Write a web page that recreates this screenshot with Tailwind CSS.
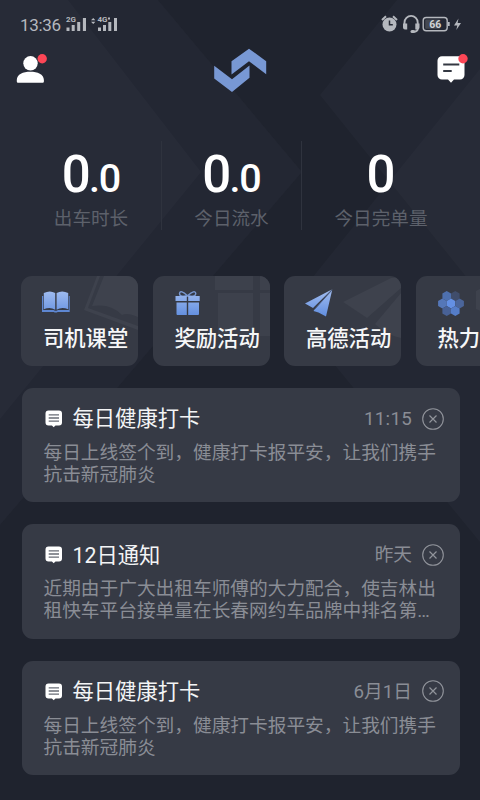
<!DOCTYPE html>
<html lang="zh-CN">
<head>
<meta charset="utf-8">
<title>司机首页</title>
<script src="https://cdn.jsdelivr.net/npm/@tailwindcss/browser@4"></script>
</head>
<body class="bg-[#1f232e]">
<svg class="absolute" width="0" height="0">
  <defs>
    <linearGradient id="blue" gradientUnits="userSpaceOnUse" x1="0" y1="3" x2="0" y2="28"><stop offset="0" stop-color="#a2bdf0"/><stop offset="1" stop-color="#6490e0"/></linearGradient>
    <symbol id="note" viewBox="0 0 18 18"><path fill="#fff" d="M3.500 .5h10.500a3 3 0 0 1 3 3v9a3 3 0 0 1-3 3H10.500L8.700 17.300 6.900 15.500H3.500a3 3 0 0 1-3-3v-9a3 3 0 0 1 3-3z"/><path d="M3.700 4.800h10.300M3.700 8h10.300M3.700 11.200h10.300" stroke="#686c76" stroke-width="1.300"/></symbol>
    <symbol id="close" viewBox="0 0 22 22"><circle cx="11" cy="11" r="10.300" fill="none" stroke="#91949b" stroke-width="1.100"/><path d="M7.500 7.500l7 7m0-7l-7 7" stroke="#91949b" stroke-width="1.200"/></symbol>
  </defs>
</svg>
<div class="relative w-[480px] h-[800px] overflow-hidden font-['Roboto','Noto_Sans_CJK_SC',sans-serif]">
  <svg class="absolute inset-0" width="480" height="800" viewBox="0 0 480 800">
    <g fill="#8692ac" fill-opacity=".045">
      <path d="M0 0H158L302 172 0 525z"/>
      <path d="M0 0H68L201 172 0 419z"/>
      <path d="M397 0L320 95 480 294V0z"/>
      <path d="M480 69L288 308 480 542z"/>
    </g>
  </svg>

  <div class="relative flex flex-col h-full">
    <header class="h-[48px] flex items-center justify-between pl-[20px] pr-[17px] text-[#b5b8be]">
      <div class="flex items-center">
        <span class="text-[17px] leading-[20px] w-[46px] tracking-[-.35px] mt-[2px]">13:36</span>
        <svg width="54" height="18" viewBox="0 0 54 18" fill="currentColor">
          <text x="0" y="7" font-size="8" font-weight="700" font-family="Roboto">2G</text>
          <path d="M.5 12.500h3V16h-3zM5.700 10h3v6h-3zM11.200 7h3v9h-3zM16.900 3H20v13h-3.100z"/>
          <path d="M25 5.300l2.200-2.300 2.200 2.300zM25 6.700h4.400L27.200 9z"/>
          <text x="31.500" y="7" font-size="8" font-weight="700" font-family="Roboto">4G</text>
          <path d="M42 2.500h2v2h-2zM32 12.500h3V16h-3zM37 10h3v6h-3zM42.300 7h3v9h-3zM48 3h3v13h-3z"/>
        </svg>
      </div>
      <svg width="82" height="20" viewBox="0 0 82 20" fill="none" stroke="currentColor">
        <circle cx="8.500" cy="10.500" r="7" fill="currentColor" stroke="none"/>
        <path d="M1 6l4-3.700M16 6l-4-3.700" stroke-width="2"/><path d="M8.500 6.500v4.300h3.300" stroke="#252934" stroke-width="1.500"/>
        <path d="M23.500 12V8.500a6.600 6.600 0 0 1 13.200 0V12M36.800 13v1.500q0 3.200-4.300 3.200" stroke-width="1.900"/>
        <path fill="currentColor" stroke="none" d="M22 9.500h4.200v6H24q-2 0-2-2zM38.500 9.500h-4.200v6h2.200q2 0 2-2z"/><rect x="29.500" y="16" width="4.500" height="3" rx="1.500" fill="currentColor" stroke="none"/>
        <rect x="42.200" y="3.500" width="24" height="13.200" rx="3" stroke-width="1.400"/><rect x="44.200" y="5.500" width="15" height="9.200" rx="1" fill="#444852" stroke="none"/><path d="M67.800 8v4" stroke-width="1.800"/>
        <text x="54.200" y="13.900" text-anchor="middle" font-size="10.500" font-weight="700" font-family="Roboto" fill="#d0d2d6" stroke="none">66</text>
        <path d="M77.500 4.500L73 11.500h3.300L75.300 16 80 9h-3.400z" fill="currentColor" stroke="none"/>
      </svg>
    </header>

    <nav class="h-[52px] flex items-start justify-between pl-[16px] pr-[11px]">
      <svg class="mt-[5px]" width="34" height="32" viewBox="0 0 34 32">
        <circle cx="14.500" cy="10.300" r="7.200" fill="#fff"/><path fill="#fff" d="M.8 28.500V27C1 21 7 18.700 14.300 18.700S27.800 21 27.900 27v1.500q0 1.200-1.200 1.200H2q-1.200 0-1.200-1.200z"/><circle cx="26.200" cy="5.800" r="4.700" fill="#fc4656"/>
      </svg>
      <svg class="mr-[6px]" width="54" height="46" viewBox="0 0 54 46" fill="#7898d4">
        <path d="M1.200 17.800L19 31.200 36.500 17.500V29.800L19 44 1.200 30.500z"/>
        <path d="M18.500 13.300L36 .7 53.200 13.300V26.300L36 13.300 18.500 26.600z"/>
      </svg>
      <svg class="mt-[5px]" width="33" height="32" viewBox="0 0 33 32">
        <path fill="#fff" d="M6 3.300H24a4.500 4.500 0 0 1 4.500 4.500V22a4.500 4.500 0 0 1-4.500 4.500H18L15 29.800 12 26.500H6A4.500 4.500 0 0 1 1.500 22V7.800A4.500 4.500 0 0 1 6 3.300z"/><path d="M7.200 11.500H23.300M7.200 18h8.500" stroke="#343842" stroke-width="1.800"/><circle cx="27" cy="5.800" r="4.700" fill="#fc4656"/>
      </svg>
    </nav>

    <section class="mt-[41px] h-[89px] flex pl-[21px] text-white font-medium text-center">
      <div class="w-[141px] border-r border-[#2f333e]">
        <div class="mt-[4px] h-[61px] leading-[60px] text-[51px] tracking-[-1.800px]">0<span class="text-[39.500px] tracking-[-1px]">.0</span></div>
        <div class="text-[18.600px] leading-[26px] font-normal text-[#5d616b]">出车时长</div>
      </div>
      <div class="w-[140px] border-r border-[#2f333e]">
        <div class="mt-[4px] h-[61px] leading-[60px] text-[51px] tracking-[-1.800px]">0<span class="text-[39.500px] tracking-[-1px]">.0</span></div>
        <div class="text-[18.600px] leading-[26px] font-normal text-[#5d616b]">今日流水</div>
      </div>
      <div class="w-[158px]">
        <div class="mt-[4px] h-[61px] leading-[60px] text-[51px]">0</div>
        <div class="text-[18.600px] leading-[26px] font-normal text-[#5d616b]">今日完单量</div>
      </div>
    </section>

    <section class="mt-[46px] ml-[21px] flex gap-[14.500px] text-[21.300px] leading-[30px] font-medium text-[#f6f7f8] whitespace-nowrap">
      <div class="relative shrink-0 w-[117px] h-[90px] rounded-[11px] bg-[#363a45] overflow-hidden pl-[20px] pt-[11px]">
        <svg class="absolute inset-0" width="117" height="90" viewBox="0 0 117 90"><path d="M76 0L63 34 117 54V50L67 32 79 0z" fill="#3e424d"/><path d="M83 0L71 30Q90 27 101 39Q106 36 117 41V0z" fill="#3e424d"/></svg>
        <svg class="relative" width="30" height="30" viewBox="0 0 30 30"><path d="M1 9H2.200v14h10.300l1.500.7h1.500l1.500-.7H27.800V9h.9v16h-12l-1 .5h-2l-1-.5H1z" fill="#5e87d2"/><path fill="url(#blue)" d="M2.800 6Q9 3 14.200 6V22.700Q9 19.500 2.800 22.300zM15.600 6Q21 3 27.200 6V22.300Q21 19.500 15.600 22.700z"/></svg>
        <div class="relative mt-[7px] pl-[2px]">司机课堂</div>
      </div>
      <div class="relative shrink-0 w-[117px] h-[90px] rounded-[11px] bg-[#363a45] overflow-hidden pl-[20px] pt-[11px]">
        <svg class="absolute inset-0" width="117" height="90" viewBox="0 0 117 90"><path d="M62 0h38v14H62zM107 0h10v14h-10zM65 17h35v43H65zM107 17h10v43h-10z" fill="#3d414c"/></svg>
        <svg class="relative" width="30" height="30" viewBox="0 0 30 30"><path fill="none" stroke="#7897d0" stroke-width="1.400" d="M14.500 8.800Q6 10 6.500 6.500Q7.500 2 14.500 8.800Q22 2 22.800 6.500Q23 10 14.500 8.800z"/><path fill="url(#blue)" d="M2.500 9h11.300v5H2.500zM15.200 9h11.500v5H15.200zM3.500 15.500h10.300V28H4.500q-1 0-1-1zM15.200 15.500H26V27q0 1-1 1h-9.800z"/></svg>
        <div class="relative mt-[7px] pl-[2px]">奖励活动</div>
      </div>
      <div class="relative shrink-0 w-[117px] h-[90px] rounded-[11px] bg-[#363a45] overflow-hidden pl-[20px] pt-[11px]">
        <svg class="absolute inset-0" width="117" height="90" viewBox="0 0 117 90"><path d="M59 26L107 2 117 1V12L83 42zM117 17L91 48Q102 59 117 62z" fill="#3e424d"/></svg>
        <svg class="relative" width="30" height="30" viewBox="0 0 30 30"><path fill="url(#blue)" d="M27.800 2.500L1 16.500 9 21zM28.300 2.500L11 21.800 9.500 24 14.500 25.500 22 29.500z"/><path d="M28 3L10.500 22.500" stroke="#47597f" stroke-width=".9"/></svg>
        <div class="relative mt-[7px] pl-[2px]">高德活动</div>
      </div>
      <div class="relative shrink-0 w-[117px] h-[90px] rounded-[11px] bg-[#363a45] overflow-hidden pl-[20px] pt-[11px]">
        <svg class="absolute inset-0" width="117" height="90" viewBox="0 0 117 90"><path d="M60 15l9-5v27l-9-4z" fill="#3e424d"/></svg>
        <svg class="relative" width="30" height="30" viewBox="0 0 30 30">
          <path fill="#4e70ae" d="M10.700 4l4.300 2.500v5L10.700 14l-4.300-2.500v-5z"/><path fill="#404d6b" d="M19.300 4l4.300 2.500v5L19.300 14 15 11.500v-5z"/>
          <path fill="#5577b8" d="M6.400 11.500l4.300 2.500v5l-4.300 2.500L2.100 19v-5z"/><path fill="#6490e4" d="M15 11.500l4.300 2.500v5L15 21.500 10.700 19v-5z"/><path fill="#4b659a" d="M23.600 11.500l4.300 2.500v5l-4.300 2.500-4.300-2.500v-5z"/>
          <path fill="#486196" d="M10.700 19l4.300 2.500v5L10.700 29l-4.300-2.500v-5z"/><path fill="#557dc8" d="M19.300 19l4.300 2.500v5L19.300 29 15 26.500v-5z"/>
        </svg>
        <div class="relative mt-[7px] pl-[2px]">热力</div>
      </div>
    </section>

    <main class="mt-[22px] ml-[21.500px] w-[438.500px] flex flex-col gap-[22px] text-[#8a8d95]">
      <article class="h-[114.400px] rounded-[11px] bg-[#363a45] pl-[22px] pr-[16px] pt-[15px]">
        <div class="flex items-center h-[32px]">
          <svg class="ml-[1px]" width="18" height="18"><use href="#note"/></svg>
          <h2 class="ml-[10px] flex-1 text-[21.300px] text-[#f3f4f5]">每日健康打卡</h2>
          <time class="text-[18.700px] tracking-[.3px] mr-[10px]">11:15</time>
          <svg class="-mt-px" width="22" height="22"><use href="#close"/></svg>
        </div>
        <p class="mt-[7px] w-[396px] text-[18.700px] leading-[22px]">每日上线签个到，健康打卡报平安，让我们携手<br>抗击新冠肺炎</p>
      </article>
      <article class="h-[114.400px] rounded-[11px] bg-[#363a45] pl-[22px] pr-[16px] pt-[15px]">
        <div class="flex items-center h-[32px]">
          <svg class="ml-[1px]" width="18" height="18"><use href="#note"/></svg>
          <h2 class="ml-[10px] flex-1 text-[21.300px] text-[#f3f4f5] pt-px">12日通知</h2>
          <time class="text-[18.700px] mr-[10px]">昨天</time>
          <svg class="-mt-px" width="22" height="22"><use href="#close"/></svg>
        </div>
        <p class="mt-[7px] w-[396px] text-[18.700px] leading-[22px]">近期由于广大出租车师傅的大力配合，使吉林出<br>租快车平台接单量在长春网约车品牌中排名第…</p>
      </article>
      <article class="h-[114.400px] rounded-[11px] bg-[#363a45] pl-[22px] pr-[16px] pt-[15px]">
        <div class="flex items-center h-[32px]">
          <svg class="ml-[1px]" width="18" height="18"><use href="#note"/></svg>
          <h2 class="ml-[10px] flex-1 text-[21.300px] text-[#f3f4f5]">每日健康打卡</h2>
          <time class="text-[18.700px] mr-[10px]">6月1日</time>
          <svg class="-mt-px" width="22" height="22"><use href="#close"/></svg>
        </div>
        <p class="mt-[7px] w-[396px] text-[18.700px] leading-[22px]">每日上线签个到，健康打卡报平安，让我们携手<br>抗击新冠肺炎</p>
      </article>
    </main>
  </div>
</div>
</body>
</html>
